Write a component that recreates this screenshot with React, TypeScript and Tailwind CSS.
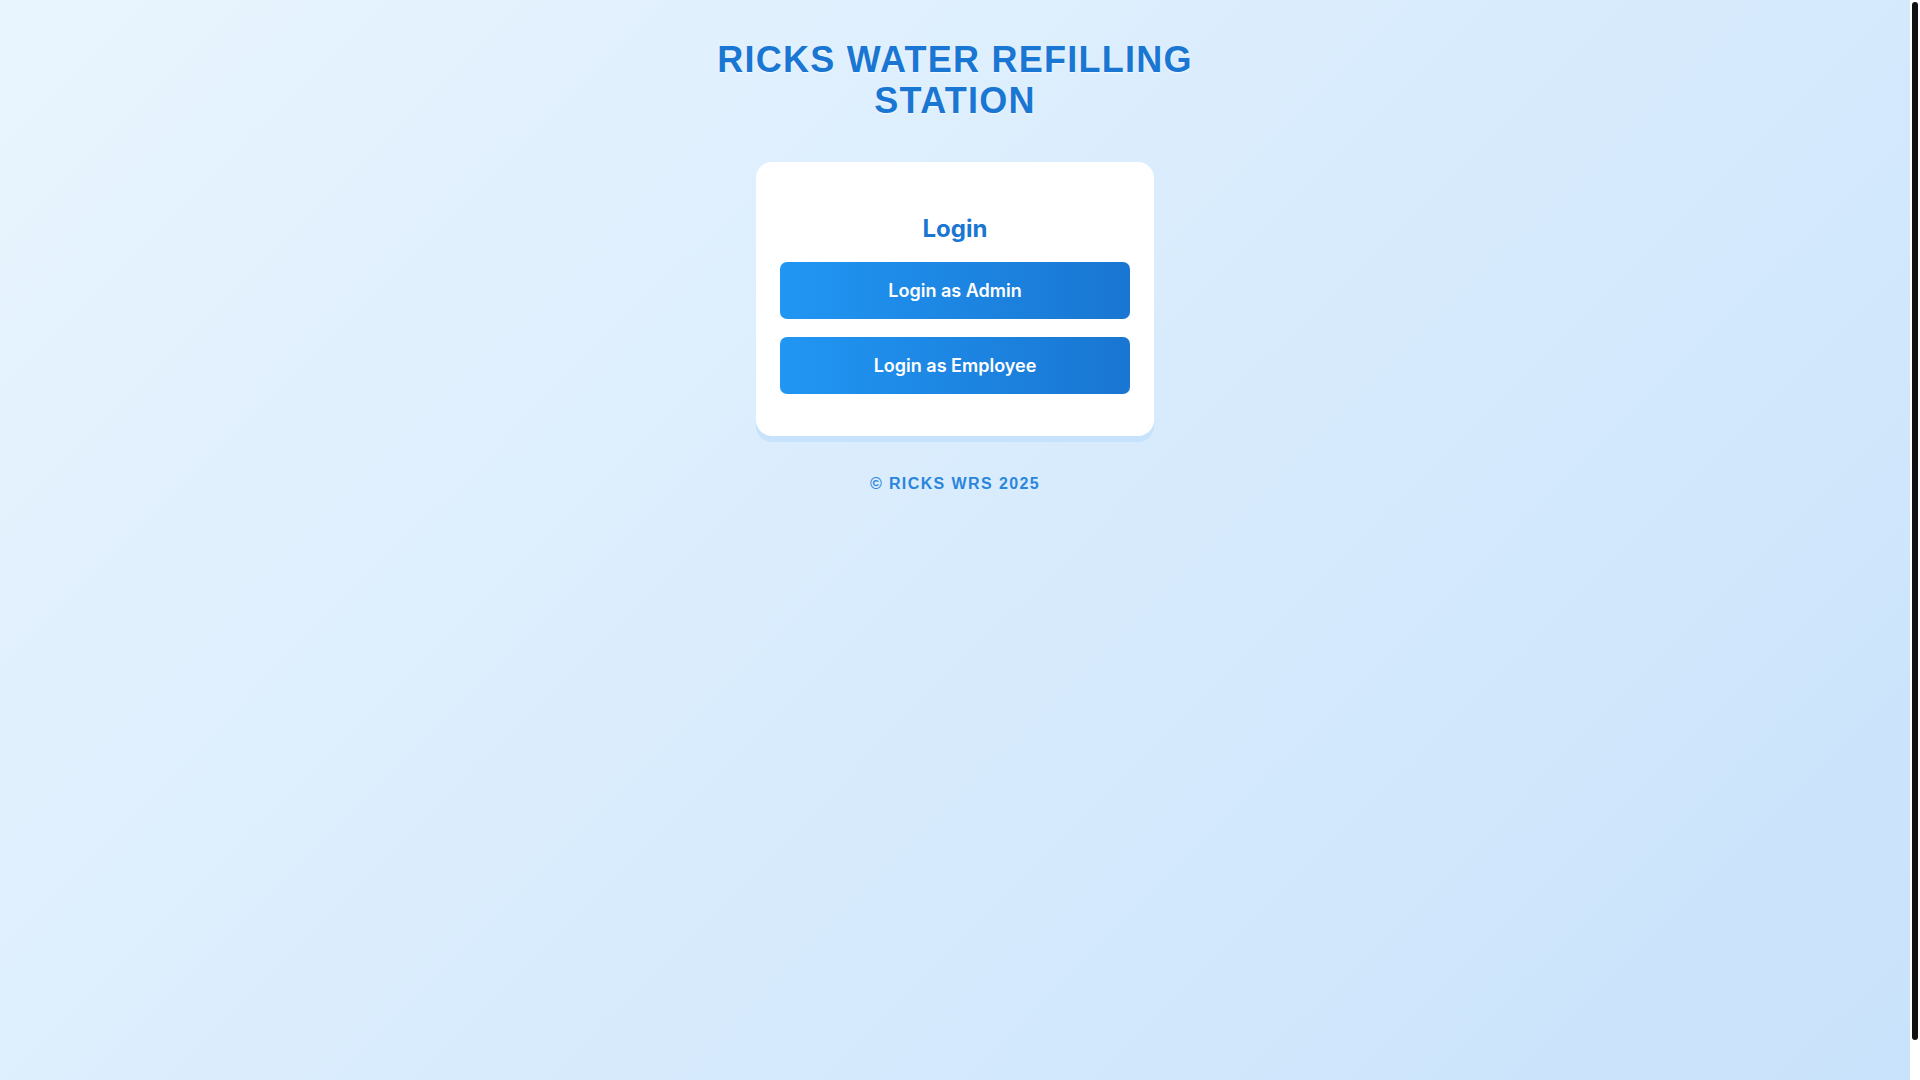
export default function App() {
    return (
        <div className="flex h-screen w-full overflow-hidden">
            <div className="min-w-0 flex-1 overflow-hidden">
                <div className="flex min-h-[1121px] flex-col items-center bg-linear-135 from-[#e9f5fe] to-[#c8e2fb] pt-[39px]">
                    {/* Title */}
                    <h1 className="max-w-[560px] text-center font-['Liberation_Sans',Arial,sans-serif] text-[36px] font-bold leading-[41px] tracking-[1.25px] text-[#1976d2] [text-shadow:0_1px_2px_rgba(255,255,255,0.8)]">
                        RICKS WATER REFILLING STATION
                    </h1>

                    {/* Card */}
                    <div className="mt-[41px] flex w-[398px] flex-col rounded-2xl bg-white px-6 pt-[49px] pb-[42px] shadow-[0_6px_0_#c7e2fb]">
                        <h2 className="text-center font-['Inter',sans-serif] text-[24px] font-bold leading-9 text-[#1976d2]">
                            Login
                        </h2>
                        <div className="mt-[15px] flex flex-col gap-[18px]">
                            <button className="h-[57px] w-full rounded-[7px] bg-linear-to-r from-[#2196f3] to-[#1976d2] font-['Inter',sans-serif] text-[18px] font-semibold text-white">
                                Login as Admin
                            </button>
                            <button className="h-[57px] w-full rounded-[7px] bg-linear-to-r from-[#2196f3] to-[#1976d2] font-['Inter',sans-serif] text-[18px] font-semibold text-white">
                                Login as Employee
                            </button>
                        </div>
                    </div>

                    {/* Footer */}
                    <p className="mt-[36px] font-['Liberation_Sans',Arial,sans-serif] text-[16px] font-bold leading-6 tracking-[1.4px] text-[#2a86dc]">
                        © RICKS WRS 2025
                    </p>
                </div>
            </div>

            {/* Scrollbar */}
            <div className="flex w-[10px] shrink-0 flex-col bg-white px-[2px] pt-[2px]">
                <div className="h-[1038px] w-full rounded-full bg-[#111111]" />
            </div>
        </div>
    );
}
